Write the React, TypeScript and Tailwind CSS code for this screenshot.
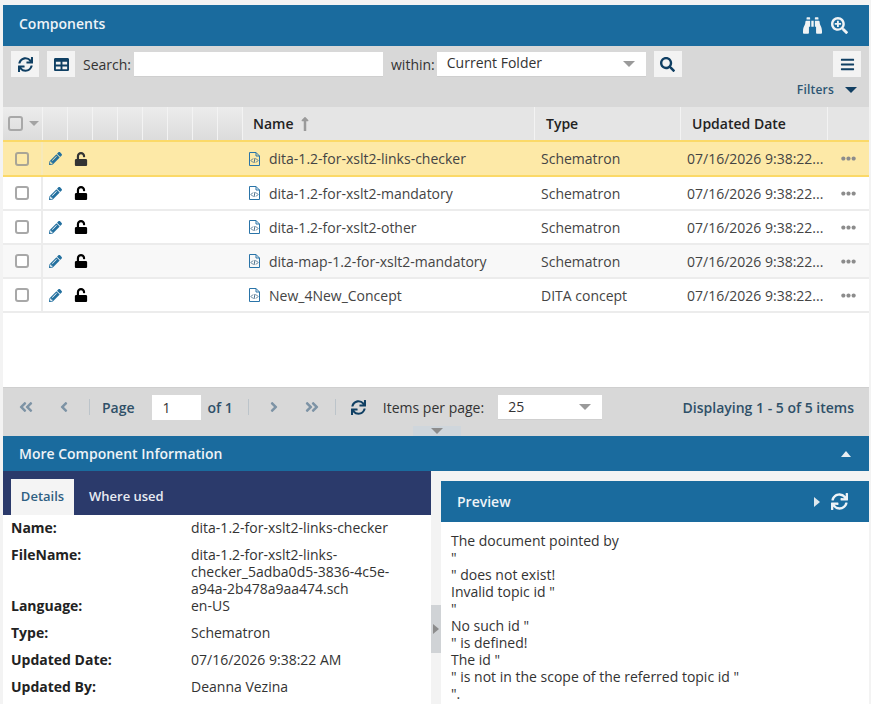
import { FaSync, FaTable, FaSearch, FaBars, FaBinoculars, FaSearchPlus, FaPencilAlt, FaUnlock, FaAngleDoubleLeft, FaAngleDoubleRight, FaAngleLeft, FaAngleRight, FaEllipsisH, FaLongArrowAltUp } from 'react-icons/fa';

const rows = [
  { name: 'dita-1.2-for-xslt2-links-checker', type: 'Schematron', selected: true },
  { name: 'dita-1.2-for-xslt2-mandatory', type: 'Schematron' },
  { name: 'dita-1.2-for-xslt2-other', type: 'Schematron' },
  { name: 'dita-map-1.2-for-xslt2-mandatory', type: 'Schematron', striped: true },
  { name: 'New_4New_Concept', type: 'DITA concept' },
];

const details = [
  { label: 'Name:', value: 'dita-1.2-for-xslt2-links-checker', h: 'h-[27px]' },
  { label: 'FileName:', value: 'dita-1.2-for-xslt2-links-checker_5adba0d5-3836-4c5e-a94a-2b478a9aa474.sch', h: 'h-[51px]' },
  { label: 'Language:', value: 'en-US', h: 'h-[27px]' },
  { label: 'Type:', value: 'Schematron', h: 'h-[27px]' },
  { label: 'Updated Date:', value: '07/16/2026 9:38:22 AM', h: 'h-[27px]' },
  { label: 'Updated By:', value: 'Deanna Vezina', h: 'h-[27px]' },
];

const preview = ['The document pointed by', '"', '" does not exist!', 'Invalid topic id "', '"', 'No such id "', '" is defined!', 'The id "', '" is not in the scope of the referred topic id "', '".'];

const Caret = ({ className }: { className: string }) => (
  <span className={`inline-block w-0 h-0 border-x-[6px] border-x-transparent border-t-[6px] ${className}`}></span>
);

const ToolButton = ({ children }: { children: React.ReactNode }) => (
  <button className="w-7 h-[26px] flex items-center justify-center bg-[#f3f3f3] text-[#0f3f63] text-[15px] shrink-0">{children}</button>
);

const FileIcon = () => (
  <svg width="13" height="14" viewBox="0 0 13 14" fill="none" stroke="#2a74a8" strokeWidth="1">
    <path d="M1.5 .5h6.5l3.5 3.5v9.5h-10z" />
    <path d="M8 .5v3.5h3.5" />
    <path d="M5 6.5l-2 2 2 2M8 6.5l2 2-2 2M7 6l-1 5" stroke="#4a6f8c" />
  </svg>
);

const App = () => {
  return (
    <div className="w-[871px] h-[704px] overflow-hidden bg-[#f3f3f3] pt-[5px] pl-[3px] pr-[2px] text-[14px] text-[#444]" style={{ fontFamily: "'Open Sans', sans-serif" }}>
      {/* Components panel */}
      <div className="h-[41px] bg-[#1a6b9e] flex items-center pl-4 pr-[21px] text-white">
        <span className="font-semibold text-[#eef3f7] -mt-1">Components</span>
        <div className="ml-auto flex items-center gap-[9px] text-[#f0f3f5] -mt-[1px]">
          <FaBinoculars className="text-[19px]" />
          <FaSearchPlus className="text-[17px]" />
        </div>
      </div>

      {/* Toolbar */}
      <div className="h-[61px] bg-[#d8d8d8] relative">
        <div className="flex items-center pt-[5px] pl-2 pr-2 h-[31px]">
          <ToolButton><FaSync /></ToolButton>
          <div className="w-2"></div>
          <ToolButton><FaTable /></ToolButton>
          <span className="ml-2 text-[#333]">Search:</span>
          <input className="ml-[3px] w-[249px] h-[25px] bg-white border-b border-[#cfcfcf] outline-none" readOnly />
          <span className="ml-2 text-[#333]">within:</span>
          <div className="ml-[2px] w-[209px] h-[25px] bg-white border-b border-[#cfcfcf] flex items-center pl-[10px] pr-[11px] text-[#333]">
            <span className="-mt-[2px]">Current Folder</span>
            <Caret className="ml-auto border-t-[#9a9a9a]" />
          </div>
          <div className="w-2"></div>
          <ToolButton><FaSearch /></ToolButton>
          <div className="ml-auto"><ToolButton><FaBars /></ToolButton></div>
        </div>
        <div className="flex items-center justify-end pr-[12px] mt-[3px] text-[12px] font-semibold text-[#2d5673] h-[20px]">
          <span className="tracking-[0.2px]">Filters</span>
          <Caret className="ml-[11px] border-t-[#123f62]" />
        </div>
      </div>

      {/* Grid header */}
      <div className="h-[33px] flex bg-[#e5e5e5] font-semibold text-[#222]">
        <div className="w-10 flex items-center pl-[5px] border-r border-[#f3f3f3] bg-gradient-to-b from-[#ececec] to-[#dcdcdc]">
          <span className="w-[15px] h-[15px] rounded-[3px] border-2 border-[#a8a8a8]"></span>
          <span className="ml-[6px] inline-block w-0 h-0 border-x-[5px] border-x-transparent border-t-[5px] border-t-[#a3a3a3]"></span>
        </div>
        {[0, 1, 2, 3, 4, 5, 6, 7].map((i) => (
          <div key={i} className="w-[25px] border-r border-[#f3f3f3] bg-gradient-to-b from-[#ececec] to-[#dcdcdc]"></div>
        ))}
        <div className="w-[292px] flex items-center pl-[10px] border-r border-[#f3f3f3]">
          Name
          <FaLongArrowAltUp className="ml-[3px] text-[#9a9a9a] text-[16px]" />
        </div>
        <div className="w-[146px] flex items-center pl-[11px] border-r border-[#f3f3f3]">Type</div>
        <div className="w-[147px] flex items-center pl-[11px] border-r border-[#f3f3f3]">Updated Date</div>
        <div className="flex-1"></div>
      </div>

      {/* Grid rows */}
      <div className="h-[247px] bg-white">
        {rows.map((row) => (
          <div
            key={row.name}
            className={`flex items-center h-[34px] ${row.selected ? 'h-[37px] bg-[#fde9a7] border-y-2 border-[#fbd968]' : 'border-b-2 border-[#ececec]'} ${row.striped ? 'bg-[#f8f8f8]' : ''}`}
          >
            <div className={`w-10 h-full flex items-center pl-[12px] border-r-2 ${row.selected ? 'border-[#f7e9b9]' : 'border-[#ececec]'}`}>
              <span className={`w-[14px] h-[14px] rounded-[3px] border-2 ${row.selected ? 'border-[#a9a596]' : 'border-[#a8a8a8] bg-white'}`}></span>
            </div>
            <div className="w-[200px] flex items-center pl-[6px]">
              <FaPencilAlt className="text-[#23709f] text-[13px]" />
              <FaUnlock className={`ml-[12px] text-[14px] ${row.selected ? 'text-[#333]' : 'text-black'}`} />
            </div>
            <div className="w-[292px] flex items-center pl-[5px]">
              <FileIcon />
              <span className="ml-2">{row.name}</span>
            </div>
            <div className="w-[146px] pl-[6px]">{row.type}</div>
            <div className="w-[147px] pl-[6px] whitespace-nowrap">07/16/2026 9:38:22...</div>
            <div className="flex-1 flex pl-[13px] text-[#8c8c8c] text-[15px]"><FaEllipsisH /></div>
          </div>
        ))}
      </div>

      {/* Pager */}
      <div className="h-[49px] bg-[#d8d8d8] relative border-t border-[#cfcfcf]">
        <div className="flex items-center h-[38px] pl-[15px] pr-[15px] text-[#2b4a63]">
          <FaAngleDoubleLeft className="text-[#7d93a5] text-[16px]" />
          <FaAngleLeft className="ml-[22px] text-[#7d93a5] text-[16px]" />
          <span className="ml-[17px] w-px h-[16px] bg-[#bcc4ca]"></span>
          <span className="ml-[12px] font-semibold text-[#2f5068]">Page</span>
          <div className="ml-[17px] w-[49px] h-[25px] bg-white pl-[11px] flex items-center text-[#333]">1</div>
          <span className="ml-[7px] font-semibold text-[#2f5068]">of 1</span>
          <span className="ml-[15px] w-px h-[16px] bg-[#bcc4ca]"></span>
          <FaAngleRight className="ml-[17px] text-[#7d93a5] text-[16px]" />
          <FaAngleDoubleRight className="ml-[22px] text-[#7d93a5] text-[16px]" />
          <span className="ml-[15px] w-px h-[16px] bg-[#bcc4ca]"></span>
          <FaSync className="ml-[15px] text-[#0f3f63] text-[15px]" />
          <span className="ml-[17px] text-[#333]">Items per page:</span>
          <div className="ml-[14px] w-[104px] h-[25px] bg-white border-b border-[#cfcfcf] flex items-center pl-[10px] pr-[11px] text-[#333]">
            25
            <Caret className="ml-auto border-t-[#9a9a9a]" />
          </div>
          <span className="ml-auto font-semibold text-[#2f5068]">Displaying 1 - 5 of 5 items</span>
        </div>
        <div className="absolute left-[410px] bottom-0 w-[48px] h-[10px] bg-[#cfd6dc] flex items-center justify-center">
          <Caret className="border-t-[#8c8c8c]" />
        </div>
      </div>

      {/* More info */}
      <div className="h-[35px] bg-[#1a6b9e] flex items-center pl-4 pr-[18px]">
        <span className="font-semibold text-[#eef3f7]">More Component Information</span>
        <span className="ml-auto inline-block w-0 h-0 border-x-[5px] border-x-transparent border-b-[6px] border-b-[#e8eef2]"></span>
      </div>

      <div className="flex h-[233px]">
        {/* Details */}
        <div className="w-[428px] bg-white">
          <div className="h-[44px] bg-[#2b3a6b] flex items-end pl-2">
            <div className="w-[63px] h-[36px] bg-[#f4f4f4] text-[13px] font-semibold text-[#2f5f82] flex items-center justify-center">Details</div>
            <div className="ml-[15px] h-[36px] text-[13px] text-[#e8ebf2] flex items-center font-semibold">Where used</div>
          </div>
          <div className="pl-2 pt-[4px] leading-[17px] text-[#333]">
            {details.map((d) => (
              <div key={d.label} className={`flex ${d.h}`}>
                <div className="w-[180px] font-bold text-[#222]">{d.label}</div>
                <div className="w-[205px]">{d.value}</div>
              </div>
            ))}
          </div>
        </div>

        {/* Splitter */}
        <div className="w-[10px] flex items-start">
          <div className="mt-[134px] w-[10px] h-[48px] bg-[#d0d3d6] flex items-center justify-center">
            <span className="inline-block w-0 h-0 border-y-[5px] border-y-transparent border-l-[6px] border-l-[#8c8c8c]"></span>
          </div>
        </div>

        {/* Preview */}
        <div className="flex-1 pt-[10px] bg-[#f3f3f3] flex flex-col">
          <div className="h-[41px] bg-[#1a6b9e] flex items-center pl-4 pr-[21px] shrink-0">
            <span className="font-semibold text-[#eef3f7]">Preview</span>
            <span className="ml-auto inline-block w-0 h-0 border-y-[5px] border-y-transparent border-l-[6px] border-l-[#dfe8ee]"></span>
            <FaSync className="ml-[11px] text-[#eef3f7] text-[17px]" />
          </div>
          <div className="flex-1 bg-white pl-[10px] pt-[10px] leading-[17px] text-[#333]">
            {preview.map((line, i) => (
              <div key={i}>{line}</div>
            ))}
          </div>
        </div>
      </div>
    </div>
  );
};

export default App;
